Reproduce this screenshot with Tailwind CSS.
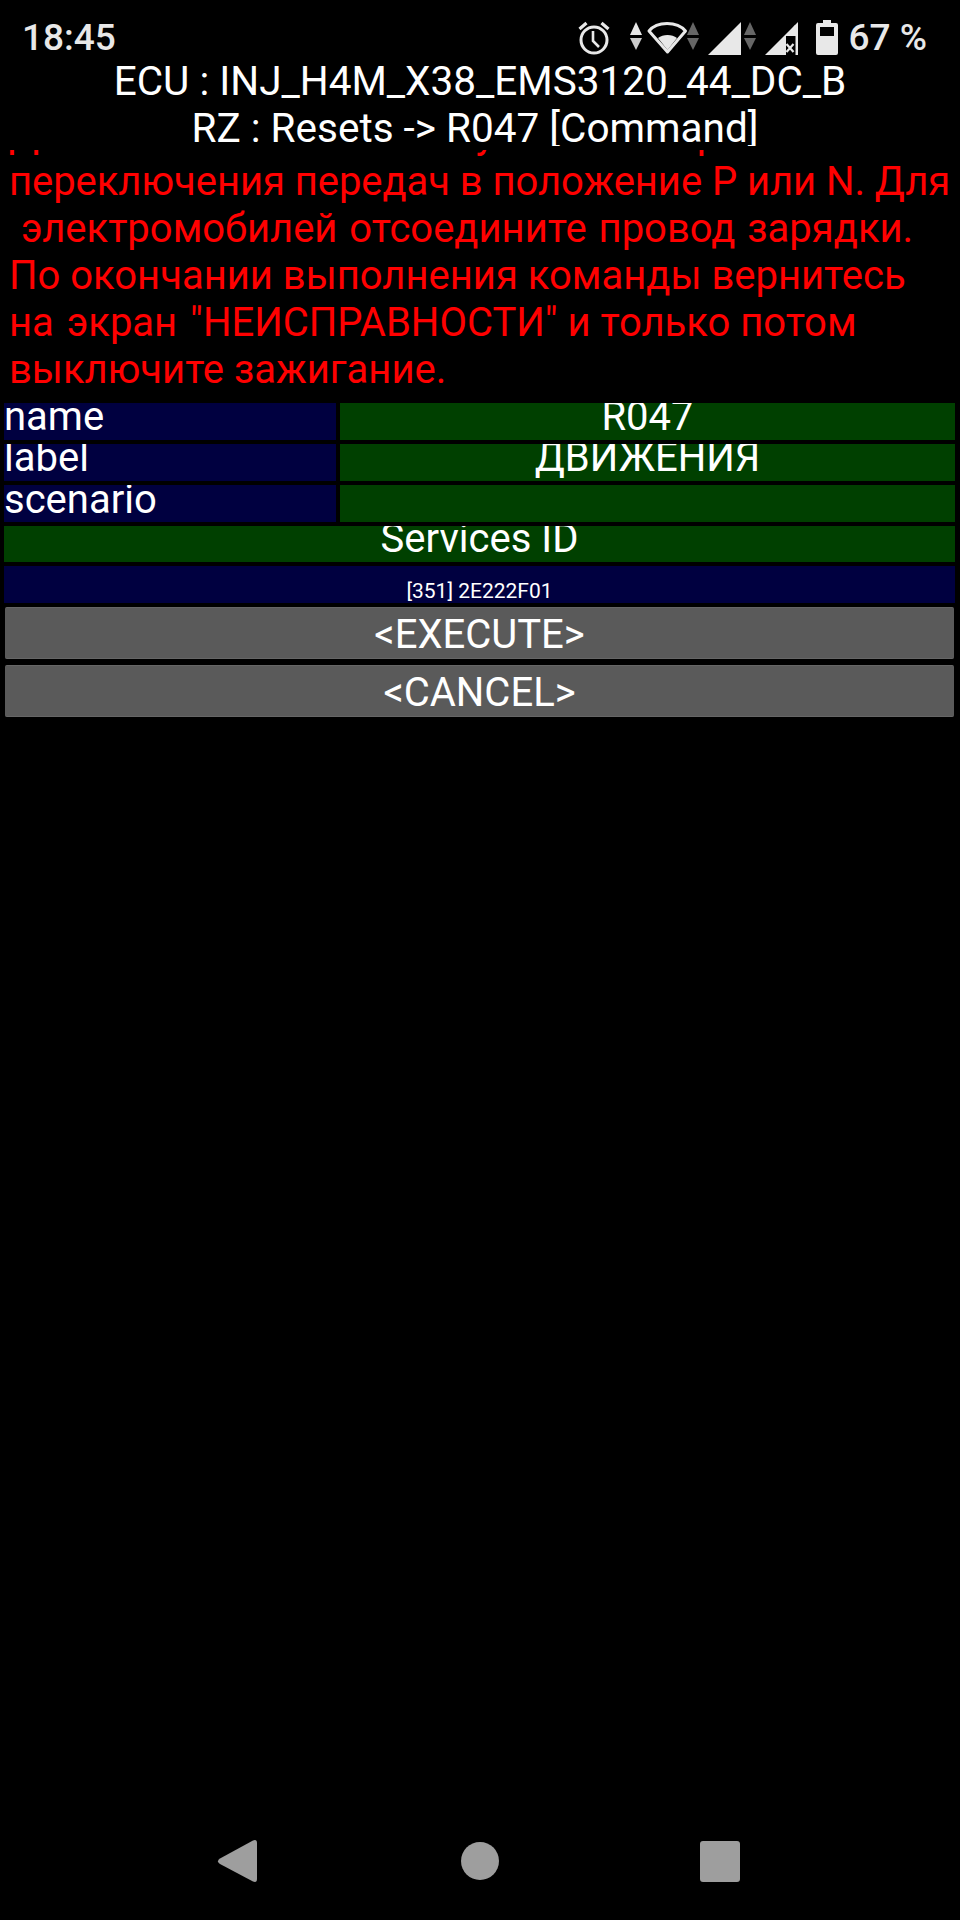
<!DOCTYPE html>
<html><head><meta charset="utf-8">
<script src="https://cdn.jsdelivr.net/npm/@tailwindcss/browser@4"></script>
</head>
<body class="bg-black">
<div class="relative w-[960px] h-[1920px] bg-black font-['Roboto',sans-serif] text-white overflow-hidden">
  <div class="h-[58px] flex items-center justify-between pl-[22px] pr-[33px] text-[#e8e8e8] pt-[16px]">
    <span class="text-[37px] font-medium leading-none">18:45</span>
    <div class="flex items-center h-[42px]">
      <svg width="32" height="36" viewBox="0 0 32 36" class="mr-[20px]" fill="none" stroke="#e8e8e8" stroke-width="3"><circle cx="16" cy="21" r="13"/><path d="M15 12v10l6 6" stroke-width="2.6"/><path d="M1.5 10l7-6M30.5 10l-7-6" stroke-width="3.2"/></svg>
      <svg width="69" height="36" viewBox="0 0 69 36" class="mr-[9px] mt-[1px]"><path d="M0 15 6 2l6 13z" fill="#e8e8e8"/><path d="M0 18h12L6 30z" fill="#cccccc"/><path d="M19 11 C27 1 47 1 55.500 11 L37.500 32z" fill="none" stroke="#e8e8e8" stroke-width="3" stroke-linejoin="round"/><path d="M28 18c5-4 14-4 19 0l-9.500 12z" fill="#e8e8e8"/><path d="M57 15l6-13 6 13z" fill="#666"/><path d="M57 18h12l-6 12z" fill="#666"/></svg>
      <svg width="33" height="33" viewBox="0 0 33 33" class="mr-[3px] mt-[3px]"><path d="M0 33 33 0v33z" fill="#e8e8e8"/></svg>
      <svg width="12" height="30" viewBox="0 0 12 30" class="mr-[9px] mt-[-3px]"><path d="M0 14 6 1l6 13z" fill="#666"/><path d="M0 17h12L6 29z" fill="#666"/></svg>
      <svg width="33" height="33" viewBox="0 0 33 33" class="mr-[18px] mt-[3px]"><path d="M0 33 33 0v33z" fill="#e8e8e8"/><path d="M21 14h12v19H21z" fill="#000"/><path d="M30 3v11h-9z" fill="#e8e8e8"/><path d="M30.500 3H33v30h-2.500z" fill="#e8e8e8"/><path d="M21.500 22l7 8M28.500 22l-7 8" stroke="#e8e8e8" stroke-width="2.200" fill="none"/></svg>
      <svg width="22" height="35" viewBox="0 0 22 35" class="mr-[11px]"><path d="M7 0h8v3h5a2 2 0 0 1 2 2v28a2 2 0 0 1-2 2H2a2 2 0 0 1-2-2V5a2 2 0 0 1 2-2h5z" fill="#e8e8e8"/><rect x="4" y="7" width="14" height="9" fill="#000"/></svg>
      <span class="text-[37px] font-medium leading-none">67 %</span>
    </div>
  </div>
  <p class="text-[40.5px] leading-[47px] text-center h-[88px] overflow-hidden whitespace-pre">ECU : INJ_H4M_X38_EMS3120_44_DC_B
RZ : Resets -&gt; R047 [Command] </p>
  <div class="mt-[4px] h-[253px] overflow-hidden text-[40px] leading-[47px] text-[#ff0000] pl-[9px]">
    <p class="mt-[-39px] whitespace-pre">Для автомобилей с АКП установите рычаг
<span class="tracking-[-0.05px]">переключения передач в положение Р или N. Для</span>
<span class="[word-spacing:2px]"> электромобилей отсоедините провод зарядки.</span>
По окончании выполнения команды вернитесь
<span class="[word-spacing:3px]">на экран </span>"НЕИСПРАВНОСТИ" и только потом
выключите зажигание.</p>
  </div>
  <div class="flex flex-col gap-[4px] pl-[4px] pr-[5px] text-[40px] leading-[27px]">
    <div class="flex gap-[4px] h-[37px]"><div class="w-[332px] bg-[#000040] overflow-hidden">name</div><div class="flex-1 bg-[#004000] text-center overflow-hidden">R047</div></div>
    <div class="flex gap-[4px] h-[37px]"><div class="w-[332px] bg-[#000040] overflow-hidden">label</div><div class="flex-1 bg-[#004000] text-center overflow-hidden">ДВИЖЕНИЯ</div></div>
    <div class="flex gap-[4px] h-[37px]"><div class="w-[332px] bg-[#000040] overflow-hidden leading-[29px]">scenario</div><div class="flex-1 bg-[#004000]"></div></div>
    <div class="h-[36px] bg-[#004000] text-center leading-[25px] overflow-hidden">Services ID</div>
    <div class="h-[37px] bg-[#000040] text-center text-[21px] leading-[25px] pt-[13px]">[351] 2E222F01</div>
    <div class="h-[52px] mx-[1px] bg-[#5a5a5a] rounded-[2px] border-y border-[#666666] text-center leading-[53px]">&lt;EXECUTE&gt;</div>
    <div class="h-[52px] mx-[1px] mt-[2px] bg-[#5a5a5a] rounded-[2px] border-y border-[#666666] text-center leading-[53px]">&lt;CANCEL&gt;</div>
  </div>
  <div class="absolute bottom-0 left-0 w-full h-[96px]">
    <svg width="960" height="96" viewBox="0 0 960 96" fill="#9e9e9e">
      <path d="M220 34.500 L253 16.500 Q257 15 257 19 V55 Q257 59 253 57.500 L220 40 Q216 37 220 34.500z"/>
      <circle cx="480" cy="37" r="19"/>
      <rect x="700" y="17" width="40" height="41" rx="3"/>
    </svg>
  </div>
</div>
</body></html>
